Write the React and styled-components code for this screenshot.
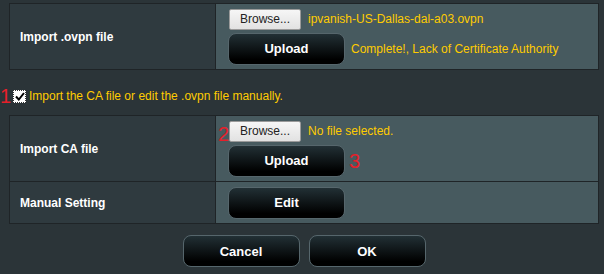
import React from 'react';
import styled, { createGlobalStyle } from 'styled-components';

const GlobalStyle = createGlobalStyle`
  html, body {
    margin: 0;
    padding: 0;
    background: #2b3438;
  }
  body {
    font-family: "Liberation Sans", Arial, sans-serif;
    font-size: 12px;
    color: #fff;
  }
`;

const Page = styled.div`
  width: 604px;
  height: 274px;
  padding-top: 3px;
  box-sizing: border-box;
  overflow: hidden;
`;

const FormTable = styled.div`
  margin-left: 9px;
  width: 590px;
  box-sizing: border-box;
  padding: 1px;
  display: grid;
  grid-template-columns: 205px 382px;
  gap: 1px;
  background: #1f2427;
`;

const Label = styled.div`
  background: #2f3a3f;
  height: ${(p) => p.h}px;
  display: flex;
  align-items: center;
  padding-left: 10px;
  font-weight: bold;
  font-size: 12px;
  color: #fff;
`;

const Cell = styled.div`
  position: relative;
  background: #475a5f;
  height: ${(p) => p.h}px;
  padding-left: 12px;
  display: flex;
  flex-direction: column;
  justify-content: center;
  gap: 3px;
`;

const Line = styled.div`
  display: flex;
  align-items: center;
  gap: ${(p) => p.gap || 7}px;
`;

const BrowseButton = styled.button`
  width: 72px;
  height: 21px;
  margin-left: 1px;
  padding: 0;
  border: 1px solid #9a9a9a;
  border-radius: 2px;
  background: linear-gradient(#f6f6f6, #e2e2e2);
  font-family: "Liberation Sans", Arial, sans-serif;
  font-size: 12px;
  color: #222;
`;

const DarkButton = styled.button`
  width: 117px;
  height: 32px;
  padding: 0;
  border: 1px solid #56666c;
  border-radius: 8px;
  background: linear-gradient(#223035, #000 85%);
  font-family: "Liberation Sans", Arial, sans-serif;
  font-weight: bold;
  font-size: 13px;
  color: #fff;
`;

const Hint = styled.span`
  color: #ffcc00;
  font-size: 12px;
`;

const Marker = styled.span`
  position: absolute;
  left: ${(p) => p.x}px;
  top: ${(p) => p.y}px;
  font-size: 20px;
  line-height: 20px;
  color: #e5202a;
`;

const CheckRow = styled.div`
  height: 16px;
  margin: 18px 0 11px;
  display: flex;
  align-items: center;
`;

const InlineMarker = styled.span`
  width: 13px;
  font-size: 20px;
  line-height: 20px;
  color: #e5202a;
`;

const CheckBox = styled.span`
  width: 13px;
  height: 13px;
  box-sizing: border-box;
  margin-right: 3px;
  background: #fff;
  border: 1px dotted #333;
  display: flex;
  align-items: center;
  justify-content: center;
`;

const Actions = styled.div`
  margin: 11px 0 0 9px;
  width: 590px;
  display: flex;
  justify-content: center;
  gap: 9px;
`;

export default function App() {
  return (
    <Page>
      <GlobalStyle />
      <FormTable>
        <Label h={65}>Import .ovpn file</Label>
        <Cell h={65}>
          <Line>
            <BrowseButton>Browse...</BrowseButton>
            <Hint>ipvanish-US-Dallas-dal-a03.ovpn</Hint>
          </Line>
          <Line gap={6}>
            <DarkButton>Upload</DarkButton>
            <Hint>Complete!, Lack of Certificate Authority</Hint>
          </Line>
        </Cell>
      </FormTable>

      <CheckRow>
        <InlineMarker>1</InlineMarker>
        <CheckBox>
          <svg width="10" height="9" viewBox="0 0 10 9">
            <path d="M1 4.5 L3.8 7.5 L9 1" fill="none" stroke="#000" strokeWidth="2" />
          </svg>
        </CheckBox>
        <Hint>Import the CA file or edit the .ovpn file manually.</Hint>
      </CheckRow>

      <FormTable>
        <Label h={65}>Import CA file</Label>
        <Cell h={65}>
          <Marker x={2} y={8}>2</Marker>
          <Line>
            <BrowseButton>Browse...</BrowseButton>
            <Hint>No file selected.</Hint>
          </Line>
          <Line>
            <DarkButton>Upload</DarkButton>
          </Line>
          <Marker x={133} y={35}>3</Marker>
        </Cell>
        <Label h={41}>Manual Setting</Label>
        <Cell h={41}>
          <DarkButton>Edit</DarkButton>
        </Cell>
      </FormTable>

      <Actions>
        <DarkButton>Cancel</DarkButton>
        <DarkButton>OK</DarkButton>
      </Actions>
    </Page>
  );
}
